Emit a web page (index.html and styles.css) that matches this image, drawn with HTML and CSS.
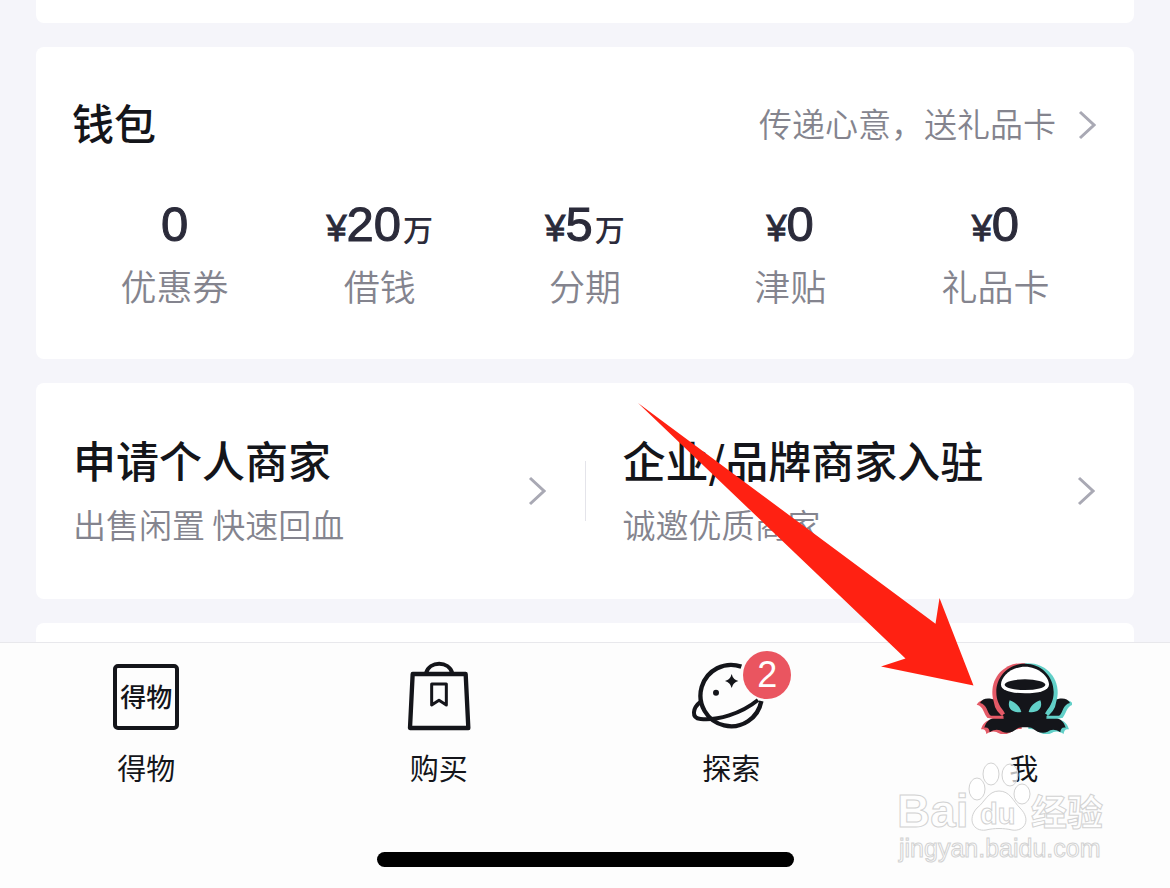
FILE: index.html
```html
<!DOCTYPE html>
<html lang="zh-CN">
<head>
    <meta charset="utf-8">
    <title>我</title>
    <link rel="stylesheet" href="styles.css">
</head>
<body>
    <main class="content">
        <section class="card card-prev"></section>

        <section class="card wallet">
            <div class="wallet-header">
                <h2>钱包</h2>
                <a class="gift-link" href="#">
                    <span>传递心意，送礼品卡</span>
                    <svg class="chevron" viewBox="0 0 18 30"><path d="M2 2L16 15L2 28"/></svg>
                </a>
            </div>
            <div class="wallet-items">
                <a class="wallet-item" href="#">
                    <span class="value">0</span>
                    <span class="label">优惠券</span>
                </a>
                <a class="wallet-item" href="#">
                    <span class="value"><small class="yen">¥</small>20<small class="unit">万</small></span>
                    <span class="label">借钱</span>
                </a>
                <a class="wallet-item" href="#">
                    <span class="value"><small class="yen">¥</small>5<small class="unit">万</small></span>
                    <span class="label">分期</span>
                </a>
                <a class="wallet-item" href="#">
                    <span class="value"><small class="yen">¥</small>0</span>
                    <span class="label">津贴</span>
                </a>
                <a class="wallet-item" href="#">
                    <span class="value"><small class="yen">¥</small>0</span>
                    <span class="label">礼品卡</span>
                </a>
            </div>
        </section>

        <section class="card merchants">
            <a class="merchant" href="#">
                <div>
                    <h2>申请个人商家</h2>
                    <p>出售闲置 快速回血</p>
                </div>
                <svg class="chevron" viewBox="0 0 18 30"><path d="M2 2L16 15L2 28"/></svg>
            </a>
            <div class="divider"></div>
            <a class="merchant" href="#">
                <div>
                    <h2>企业/品牌商家入驻</h2>
                    <p>诚邀优质商家</p>
                </div>
                <svg class="chevron" viewBox="0 0 18 30"><path d="M2 2L16 15L2 28"/></svg>
            </a>
        </section>

        <section class="card card-next"></section>
    </main>

    <nav class="tabbar">
        <div class="tabs">
            <a class="tab" href="#">
                <span class="icon icon-box"><span class="box-logo">得物</span></span>
                <span>得物</span>
            </a>
            <a class="tab" href="#">
                <svg class="icon line" viewBox="57 60 240 222">
                    <path stroke-width="13" d="M98 102H257L265 264H90Z"/>
                    <path stroke-width="12" d="M138 100C148 62 207 62 217 100"/>
                    <path stroke-width="9" d="M155 132H199V195L177 181L155 195Z"/>
                </svg>
                <span>购买</span>
            </a>
            <a class="tab" href="#">
                <span class="icon-wrap">
                    <svg class="icon line" viewBox="63 60 240 222">
                        <path class="flat" stroke-width="13" d="M214 80A92 92 0 1 0 274 183"/>
                        <path class="flat" stroke-width="12" d="M93 184C67 204 63 234 92 237C142 242 212 222 264 180"/>
                        <circle class="solid" cx="138" cy="158" r="9"/>
                        <path class="solid" d="M185 102Q189 119 205 123Q189 127 185 144Q181 127 165 123Q181 119 185 102Z"/>
                    </svg>
                    <span class="badge">2</span>
                </span>
                <span>探索</span>
            </a>
            <a class="tab" href="#">
                <svg class="icon icon-me" viewBox="48 60 288 222">
                    <defs>
                        <g id="tentacles">
                            <path d="M60 189C68 173 88 173 108 181C110 200 116 216 130 228H92C80 216 82 194 60 189Z"/>
                            <path d="M195 222H130L104 234C88 236 78 246 73 263C84 261 88 267 89 277C108 265 118 270 127 275C143 282 159 276 171 266C178 262 186 262 195 262Z"/>
                        </g>
                    </defs>
                    <g fill="#e45a67">
                        <path d="M195 70C143 64 97 104 97 156C97 184 107 204 120 220L195 240Z"/>
                        <use href="#tentacles" x="-10" y="5"/>
                    </g>
                    <g fill="#62d0c8">
                        <path d="M195 70C247 64 293 104 293 156C293 184 283 204 270 220L195 240Z"/>
                        <use href="#tentacles" transform="translate(400 5) scale(-1 1)"/>
                    </g>
                    <g fill="#14151a">
                        <use href="#tentacles"/>
                        <use href="#tentacles" transform="translate(390 0) scale(-1 1)"/>
                    </g>
                    <g fill="none" stroke-width="9" stroke-linecap="round">
                        <path stroke="#e45a67" d="M103 160C103 190 110 210 126 222M86 230C100 234 116 230 128 232"/>
                        <path stroke="#62d0c8" d="M287 160C287 190 280 210 264 222M304 230C290 234 274 230 262 232"/>
                    </g>
                    <path fill="#14151a" d="M195 71C243 71 281 108 281 156C281 180 272 198 260 212C254 220 254 226 262 232L195 250L128 232C136 226 136 220 130 212C118 198 109 180 109 156C109 108 147 71 195 71Z"/>
                    <path fill="#fff" d="M195 80C235 80 267 110 267 134C267 151 236 160 195 160C154 160 123 151 123 134C123 110 155 80 195 80Z"/>
                    <ellipse cx="195" cy="134" rx="61" ry="16" fill="#14151a"/>
                    <path fill="#62d0c8" d="M149 181C166 187 179 198 184 216C156 221 140 203 149 181ZM241 181C224 187 211 198 206 216C234 221 250 203 241 181Z"/>
                </svg>
                <span>我</span>
            </a>
        </div>
        <div class="home-indicator"></div>
    </nav>

    <svg class="pointer" viewBox="638 403 336 283">
        <path d="M638 403L935.500 623.700L939.500 598L973.500 685.500L881 666.500L905.500 658.500Z"/>
    </svg>

    <svg class="watermark" viewBox="0 0 220 110">
        <text class="wm-bold" x="5" y="71" font-size="46">Bai</text>
        <ellipse cx="85" cy="33" rx="8" ry="11"/>
        <ellipse cx="99" cy="18" rx="8" ry="11"/>
        <ellipse cx="118" cy="19" rx="8" ry="11"/>
        <ellipse cx="130" cy="38" rx="8" ry="10"/>
        <path d="M107 35C118 35 121 45 128 52C140 64 132 76 120 74C112 72 102 72 94 74C81 76 75 63 85 52C93 46 96 35 107 35Z"/>
        <text class="wm-bold" x="88" y="68" font-size="29">du</text>
        <text class="wm-bold wm-cjk" x="139" y="70" font-size="36">经验</text>
        <text x="7" y="101" font-size="25">jingyan.baidu.com</text>
    </svg>
</body>
</html>
```

FILE: styles.css
```css
* {
    box-sizing: border-box;
}
body {
    display: flex;
    flex-direction: column;
    height: 100vh;
    margin: 0;
    overflow: hidden;
    position: relative;
    background: #f5f5fa;
    color: #14151a;
    font-family: "Liberation Sans", "Noto Sans CJK SC", sans-serif;
}
h2, p {
    margin: 0;
    font-weight: 400;
}
h2 {
    font-family: "Noto Sans CJK SC", sans-serif;
    font-size: 43px;
    font-weight: 500;
    line-height: 54px;
    white-space: nowrap;
}
a {
    color: inherit;
    text-decoration: none;
}

/* cards */
.content {
    display: flex;
    flex: 1;
    flex-direction: column;
    gap: 24px;
    min-height: 0;
    padding: 0 36px;
    overflow: hidden;
}
.card {
    flex-shrink: 0;
    background: #fff;
    border-radius: 8px;
}
.card-prev {
    height: 23px;
    border-radius: 0 0 8px 8px;
}
.card-next {
    flex: 1;
    border-radius: 8px 8px 0 0;
}
.chevron {
    flex-shrink: 0;
    width: 18px;
    height: 30px;
    fill: none;
    stroke: #a9a9b4;
    stroke-width: 3;
}

/* wallet */
.wallet {
    padding: 48px 36px 49px;
}
.wallet-header {
    display: flex;
    align-items: flex-start;
    justify-content: space-between;
    margin-bottom: 39px;
}
.wallet-header h2 {
    font-size: 42px;
}
.gift-link {
    display: flex;
    align-items: center;
    gap: 22px;
    padding-right: 2px;
    color: #84848e;
    font-family: "Noto Sans CJK SC", sans-serif;
    font-size: 33px;
    font-weight: 350;
    line-height: 56px;
}
.gift-link span {
    padding-bottom: 4px;
}
.wallet-items {
    display: flex;
}
.wallet-item {
    display: flex;
    flex: 1;
    flex-direction: column;
    align-items: center;
    gap: 6px;
}
.value {
    height: 60px;
    color: #2b2b3a;
    font-size: 49px;
    line-height: 60px;
    -webkit-text-stroke: 1px #2b2b3a;
}
.yen {
    font-size: 36px;
}
.unit {
    margin-left: 2px;
    font-size: 30px;
    -webkit-text-stroke: 0;
    font-weight: 500;
}
.label {
    color: #84848e;
    font-family: "Noto Sans CJK SC", sans-serif;
    font-size: 36px;
    font-weight: 350;
    line-height: 50px;
}

/* merchants */
.merchants {
    display: flex;
    align-items: center;
}
.merchant {
    display: flex;
    flex: 1;
    align-items: center;
    justify-content: space-between;
    padding: 49px 39px 49px 37px;
}
.merchant p {
    margin: 16px 0 4px;
    color: #84848e;
    font-family: "Noto Sans CJK SC", sans-serif;
    font-size: 33px;
    font-weight: 350;
    line-height: 44px;
}
.divider {
    width: 1px;
    height: 60px;
    background: #e4e4ea;
}

/* tab bar */
.tabbar {
    padding: 17px 0 21px;
    background: #fdfdfd;
    border-top: 1px solid #e8e8ec;
}
.tabs {
    display: flex;
}
.tab {
    display: flex;
    flex: 1;
    flex-direction: column;
    align-items: center;
    gap: 15px;
    font-family: "Noto Sans CJK SC", sans-serif;
    font-size: 29px;
    line-height: 36px;
}
.icon {
    display: block;
    width: 80px;
    height: 74px;
}
.icon-wrap {
    position: relative;
}
.icon-me {
    width: 96px;
}
.icon-box {
    padding: 4px 7px;
}
.box-logo {
    display: flex;
    align-items: center;
    justify-content: center;
    height: 66px;
    padding-bottom: 2px;
    border: 4px solid #14151a;
    border-radius: 5px;
    font-size: 26px;
    font-weight: 500;
}
.line {
    fill: none;
    stroke: #14151a;
    stroke-linecap: round;
    stroke-linejoin: round;
}
.line .flat {
    stroke-linecap: butt;
}
.line .solid {
    fill: #14151a;
    stroke: none;
}
.badge {
    position: absolute;
    top: -9px;
    right: -20px;
    width: 48px;
    height: 48px;
    border-radius: 50%;
    background: #ea5560;
    color: #fff;
    font-family: "Liberation Sans", sans-serif;
    font-size: 36px;
    line-height: 48px;
    text-align: center;
}
.home-indicator {
    width: 417px;
    height: 15px;
    margin: 67px auto 0;
    border-radius: 8px;
    background: #000;
}

/* overlays */
.pointer {
    position: absolute;
    top: 403px;
    left: 638px;
    width: 336px;
    height: 283px;
    fill: #ff2112;
    pointer-events: none;
}
.watermark {
    position: absolute;
    right: 58px;
    bottom: 22px;
    width: 220px;
    height: 110px;
    fill: #fff;
    fill-opacity: 0.7;
    stroke: #d2d2d2;
    stroke-width: 1;
    font-family: "Liberation Sans", sans-serif;
    pointer-events: none;
}
.wm-bold {
    font-weight: 700;
}
.wm-cjk {
    font-family: "Noto Sans CJK SC", sans-serif;
}
```
